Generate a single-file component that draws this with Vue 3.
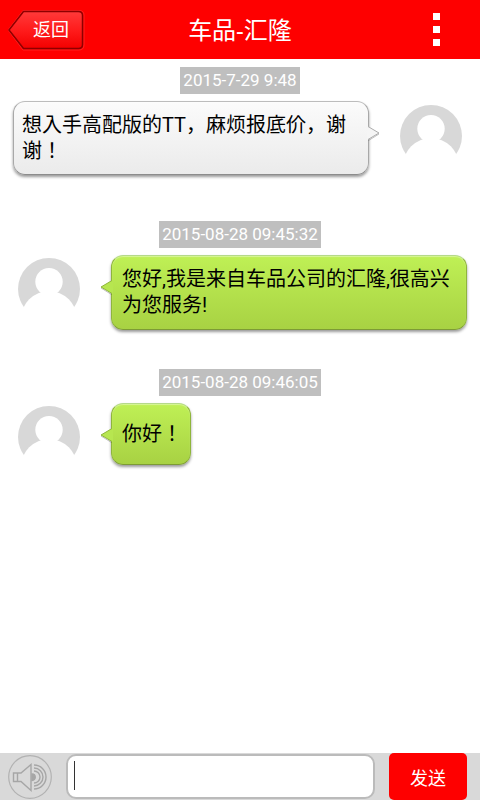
<script setup>
import { ref } from 'vue'

const draft = ref('')

const messages = [
  { id: 1, mine: true, time: '2015-7-29 9:48', text: '想入手高配版的TT，麻烦报底价，谢谢！' },
  { id: 2, mine: false, time: '2015-08-28 09:45:32', text: '您好,我是来自车品公司的汇隆,很高兴为您服务!' },
  { id: 3, mine: false, time: '2015-08-28 09:46:05', text: '你好！' }
]
</script>

<template>
  <div class="chat">
    <header class="bar">
      <button class="back" type="button">
        <svg class="back-shape" viewBox="0 0 78 42" aria-hidden="true">
          <defs>
            <linearGradient id="backFill" x1="0" y1="0" x2="0" y2="1">
              <stop offset="0" stop-color="#ff3a3a" />
              <stop offset="0.5" stop-color="#ff1c1c" />
              <stop offset="1" stop-color="#f40000" />
            </linearGradient>
          </defs>
          <path d="M15 1.500H71Q76 1.500 76 6V36Q76 41 71 41H15L0 21Z" fill="none" stroke="#ff5050" stroke-opacity="0.4" />
          <path d="M15.500 2.500H70.500Q74.500 2.500 74.500 6.500V35.500Q74.500 39.500 70.500 39.500H15.500L1 21Z" fill="url(#backFill)" stroke="#8e0000" stroke-width="1.500" />
        </svg>
        <span class="back-label">返回</span>
      </button>
      <h1 class="title">车品-汇隆</h1>
      <button class="menu" type="button" aria-label="菜单">
        <span class="dot"></span>
        <span class="dot"></span>
        <span class="dot"></span>
      </button>
    </header>

    <main class="thread">
      <article v-for="m in messages" :key="m.id" class="message" :class="{ mine: m.mine }">
        <time class="time">{{ m.time }}</time>
        <div class="row">
          <svg class="avatar" viewBox="0 0 62 50" aria-hidden="true">
            <circle cx="31" cy="31" r="31" fill="#d8d8d8" />
            <circle cx="31" cy="23.700" r="13.700" fill="#fff" />
            <circle cx="31" cy="61" r="28" fill="#fff" />
            <path d="M23 33H39V40H23Z" fill="#fff" />
          </svg>
          <div class="bubble">
            <svg class="tail" viewBox="0 0 13 16" aria-hidden="true">
              <path class="tail-fill" d="M13 1.500H12L1 8L12 14.500H13Z" />
              <path class="tail-shade" d="M1 9L11.500 15.500" />
              <path class="tail-edge" d="M12 1.500L1 8L12 14.500" />
            </svg>
            <p class="text">{{ m.text }}</p>
          </div>
        </div>
      </article>
    </main>

    <form class="composer" @submit.prevent>
      <button class="voice" type="button" aria-label="语音">
        <svg viewBox="0 0 44 44" aria-hidden="true" fill="none" stroke="#a6a6a6">
          <circle cx="22" cy="22" r="21.300" stroke="#b2b2b2" stroke-width="1.200" />
          <g stroke-width="1.400">
            <path d="M5.500 18H13L23 9.500V35.500L13 26.500H5.500Z" />
            <path d="M9.500 18V26.500" />
            <path d="M24 19A3 3 0 0 1 24 25.500Z" fill="#a6a6a6" />
            <path d="M26 16A6 6 0 0 1 26 28" />
            <path d="M26 13A9 9 0 0 1 26 31" />
            <path d="M26 10A12 12 0 0 1 26 34" />
          </g>
        </svg>
      </button>
      <div class="field">
        <input v-model="draft" class="input" type="text" aria-label="消息" />
        <span class="caret"></span>
      </div>
      <button class="send" type="submit">发送</button>
    </form>
  </div>
</template>

<style>
body {
  background: #fff;
}
</style>

<style scoped>
.chat {
  display: flex;
  flex-direction: column;
  min-height: 100vh;
  font-family: Roboto, "Noto Sans CJK SC", sans-serif;
  color: #000;
}

button {
  padding: 0;
  border: 0;
  background: none;
  font-family: inherit;
  color: #fff;
}

.bar {
  display: grid;
  grid-template-columns: 1fr auto 1fr;
  align-items: center;
  height: 59px;
  padding: 0 8px;
  background: #fe0000;
}

.back {
  display: grid;
  align-items: center;
  justify-self: start;
  width: 78px;
  height: 42px;
}

.back-shape,
.back-label {
  grid-area: 1 / 1;
}

.back-shape {
  display: block;
  width: 100%;
}

.back-label {
  position: relative;
  padding-left: 8px;
  font-size: 18px;
  line-height: 26px;
}

.title {
  margin: 0;
  color: #fff;
  font-family: "Noto Sans", "Noto Sans CJK SC", sans-serif;
  font-size: 24px;
  font-weight: 400;
  line-height: 36px;
}

.menu {
  display: flex;
  flex-direction: column;
  gap: 6px;
  justify-self: end;
  padding: 8px 32px;
}

.dot {
  width: 7px;
  height: 7px;
  background: #fff;
}

.thread {
  flex: 1;
  padding: 8px 13px 0;
}

.message {
  display: flex;
  flex-direction: column;
  align-items: center;
  gap: 7px;
  padding-bottom: 39px;
}

.mine {
  padding-bottom: 46px;
}

.time {
  padding: 0 3px;
  background: #bfbfbf;
  color: #fff;
  font-size: 17px;
  line-height: 27px;
}

.row {
  display: flex;
  align-items: flex-start;
  align-self: stretch;
  gap: 31px;
  padding-left: 5px;
}

.mine .row {
  flex-direction: row-reverse;
  padding: 0 5px 0 0;
}

.avatar {
  flex: none;
  width: 62px;
  height: 50px;
  margin-top: 3px;
}

.mine .avatar {
  margin-top: 4px;
}

.bubble {
  position: relative;
  display: flex;
  align-items: center;
  box-sizing: border-box;
  min-height: 62px;
  padding: 10px 8px 11px 10px;
  border: 1px solid #8fb53c;
  border-top-color: #b5d98a;
  border-bottom-color: #7d9b35;
  border-radius: 12px;
  background: linear-gradient(#bff055, #a8d243);
  box-shadow: 0 2px 3px rgba(0, 0, 0, 0.4), inset 0 1px 1px rgba(255, 255, 255, 0.4);
}

.mine .bubble {
  flex: 1;
  padding: 10px 8px;
  border-color: #bcbcbc #a8a8a8 #8c8c8c;
  background: linear-gradient(#fbfbfb, #ebebeb);
}

.tail {
  position: absolute;
  top: 23px;
  right: 100%;
  width: 13px;
  height: 16px;
  margin-right: -1px;
}

.mine .tail {
  right: auto;
  left: 100%;
  margin: 0 0 0 -1px;
  transform: scaleX(-1);
}

.tail-fill {
  fill: #b7e650;
}

.tail-edge {
  fill: none;
  stroke: #8fb53c;
}

.tail-shade {
  fill: none;
  stroke: #000;
  stroke-opacity: 0.25;
}

.mine .tail-fill {
  fill: #f5f5f5;
}

.mine .tail-edge {
  stroke: #acacac;
}

.text {
  margin: 0;
  font-family: Roboto, "Noto Sans CJK JP", sans-serif;
  font-size: 20px;
  line-height: 26px;
  line-break: anywhere;
}

.composer {
  display: flex;
  align-items: center;
  gap: 14px;
  height: 47px;
  padding: 0 13px 0 8px;
  background: #d9d9d9;
}

.voice {
  flex: none;
  width: 44px;
  height: 44px;
}

.voice svg {
  display: block;
}

.field {
  position: relative;
  flex: 1;
  height: 45px;
}

.input {
  box-sizing: border-box;
  width: 100%;
  height: 100%;
  padding: 0 8px;
  border: 2px solid #bbb;
  border-radius: 10px;
  outline: 0;
  background: #fff;
  font-family: inherit;
  font-size: 20px;
}

.caret {
  position: absolute;
  top: 7px;
  left: 8px;
  width: 1px;
  height: 29px;
  background: #333;
}

.send {
  flex: none;
  width: 78px;
  height: 47px;
  border-radius: 5px;
  background: #fe0000;
  font-size: 18px;
}
</style>
